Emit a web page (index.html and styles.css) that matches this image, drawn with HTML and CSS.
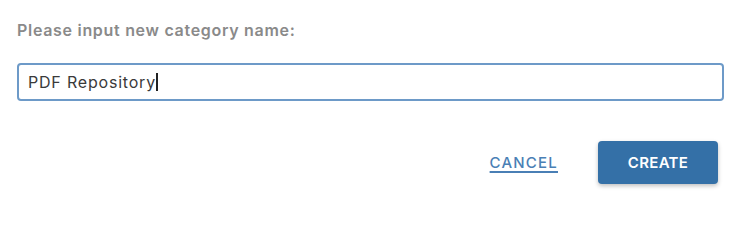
FILE: index.html
```html
<!DOCTYPE html>
<html>
<head>
<meta charset="utf-8">
<link rel="stylesheet" href="styles.css">
</head>
<body>
<div class="dialog">
  <label class="prompt" for="name">Please input new category name:</label>
  <div class="field"><span class="value">PDF Repository</span><span class="caret"></span></div>
  <div class="actions">
    <a class="cancel" href="#">CANCEL</a>
    <button class="create">CREATE</button>
  </div>
</div>
</body>
</html>
```
FILE: styles.css
```css
html, body { margin: 0; padding: 0; background: #fff; }
.dialog {
  width: 740px;
  height: 202px;
  box-sizing: border-box;
  padding: 21px 16px 0 17px;
  font-family: Inter, "Open Sans", "Liberation Sans", Arial, sans-serif;
}
.prompt {
  display: block;
  font-size: 16px;
  font-weight: 600;
  letter-spacing: 0.7px;
  color: #8a8a8a;
  line-height: 18px;
}
.field {
  margin-top: 24px;
  height: 38px;
  box-sizing: border-box;
  border: 2px solid #6d9ac8;
  border-radius: 4px;
  display: flex;
  align-items: center;
  padding-left: 9px;
}
.value {
  font-size: 16px;
  letter-spacing: 0.8px;
  color: #3a3a3a;
}
.caret {
  display: inline-block;
  width: 2px;
  height: 18px;
  background: #222;
}
.actions {
  margin-top: 40px;
  display: flex;
  justify-content: flex-end;
  align-items: center;
  gap: 40px;
  padding-right: 6px;
}
.cancel {
  font-size: 15px;
  font-weight: 500;
  letter-spacing: 1.2px;
  color: #4a7fb5;
  text-decoration: underline;
  text-decoration-thickness: 2px;
  text-underline-offset: 3px;
}
.create {
  width: 120px;
  height: 43px;
  background: #3470a7;
  color: #fff;
  border: none;
  border-radius: 4px;
  font-family: Inter, "Open Sans", "Liberation Sans", Arial, sans-serif;
  font-size: 15px;
  font-weight: 600;
  letter-spacing: 0.3px;
  box-shadow: 0 2px 4px rgba(0,0,0,0.25);
}
```
